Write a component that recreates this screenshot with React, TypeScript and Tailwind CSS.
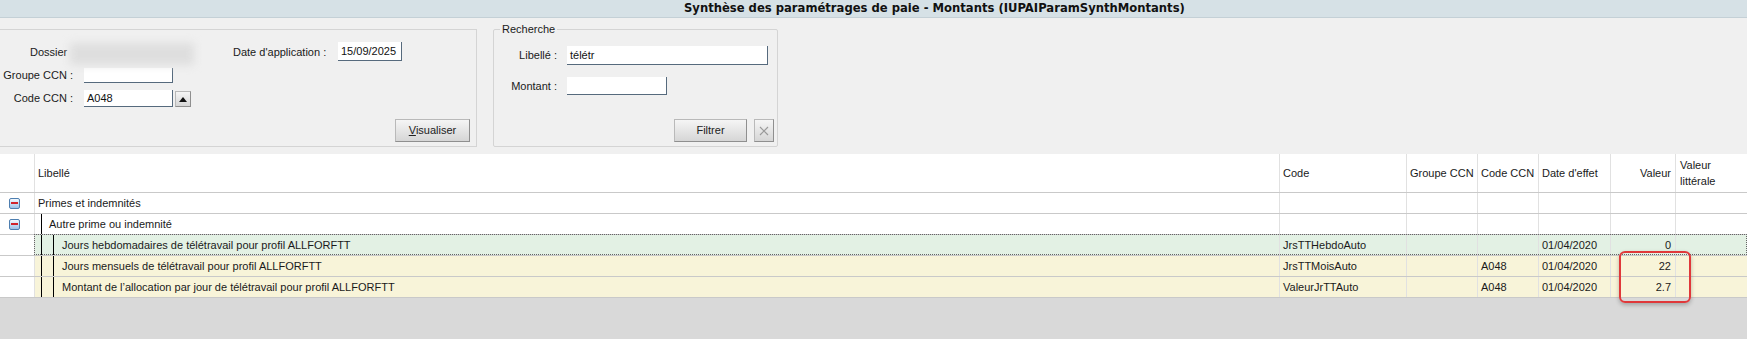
import React from 'react';

const cols = 'grid grid-cols-[35px_1245px_127px_71px_61px_72px_65px_1fr]';
const cell = 'flex items-center border-r border-[#e1e1e1] px-[3px] whitespace-nowrap overflow-hidden';

function MinusIcon() {
  return (
    <div className="w-[11px] h-[11px] rounded-[2px] border border-[#4d7eb0] bg-linear-to-b from-[#f4f9fe] to-[#9cc2e8] flex items-center justify-center">
      <div className="w-[7px] h-[2px] bg-[#d1242c]" />
    </div>
  );
}

function Field({ className, value }: { className: string; value?: string }) {
  return (
    <div className={`bg-white border-b border-r border-[#566a7d] flex items-center px-[3px] text-[11px] text-[#111] ${className}`}>
      {value}
    </div>
  );
}

function Btn({ className, children }: { className: string; children: React.ReactNode }) {
  return (
    <div className={`flex items-center justify-center border border-[#b9b9b9] border-r-[#8f8f8f] border-b-[#8f8f8f] bg-linear-to-b from-[#f5f5f5] to-[#d6d6d6] text-[11px] text-[#222] ${className}`}>
      {children}
    </div>
  );
}

const leaves = [
  { label: 'Jours hebdomadaires de télétravail pour profil ALLFORFTT', code: 'JrsTTHebdoAuto', ccn: '', date: '01/04/2020', val: '0', bg: 'bg-[#e3f1e4]', focus: true },
  { label: 'Jours mensuels de télétravail pour profil ALLFORFTT', code: 'JrsTTMoisAuto', ccn: 'A048', date: '01/04/2020', val: '22', bg: 'bg-[#f8f4d9]', focus: false },
  { label: 'Montant de l’allocation par jour de télétravail pour profil ALLFORFTT', code: 'ValeurJrTTAuto', ccn: 'A048', date: '01/04/2020', val: '2.7', bg: 'bg-[#f8f4d9]', focus: false },
];

export default function App() {
  return (
    <div className="relative w-[1747px] h-[339px] overflow-hidden bg-[#d9d9d9] font-['Liberation_Sans',Arial,sans-serif] text-[11px] text-[#1a1a1a]">
      {/* title */}
      <div className="h-[18px] bg-[#d6e1e6] border-b border-[#c4d0d6] flex items-center pl-[684px]">
        <span className="font-['DejaVu_Sans',sans-serif] font-bold text-[11.6px] text-[#111] whitespace-nowrap">
          Synthèse des paramétrages de paie - Montants (IUPAIParamSynthMontants)
        </span>
      </div>

      {/* filters */}
      <div className="h-[136px] bg-[#f0f0f0] flex items-start pt-[11px]">
        <div className="w-[477px] h-[118px] border-t border-r border-b border-[#d4d4d4] flex flex-col">
          <div className="mt-[10px] flex items-start h-[28px]">
            <div className="w-[70px] pl-[30px] h-[24px] flex items-center">Dossier</div>
            <div className="mt-[3px] w-[124px] h-[22px] bg-[#dedede] blur-[4px]" />
            <div className="ml-[39px] w-[105px] h-[24px] flex items-center">Date d'application :</div>
            <Field className="mt-[2px] w-[64px] h-[19px]" value="15/09/2025" />
          </div>
          <div className="flex items-center h-[15px]">
            <div className="w-[73px] text-right">Groupe CCN :</div>
            <Field className="ml-[11px] w-[89px] h-[15px]" />
          </div>
          <div className="mt-[7px] flex items-start h-[17px]">
            <div className="w-[73px] h-[17px] flex items-center justify-end">Code CCN :</div>
            <Field className="ml-[11px] w-[89px] h-[17px]" value="A048" />
            <Btn className="ml-[2px] mt-[1px] w-[16px] h-[16px]">
              <svg width="8" height="5" viewBox="0 0 8 5"><polygon points="4,0 8,5 0,5" fill="#111" /></svg>
            </Btn>
          </div>
          <div className="mt-[12px] flex justify-end pr-[6px]">
            <Btn className="w-[75px] h-[23px]">
              <span><span className="underline">V</span>isualiser</span>
            </Btn>
          </div>
        </div>

        <div className="relative ml-[16px] w-[285px] h-[118px] border border-[#d4d4d4] rounded-[2px] flex flex-col">
          <div className="absolute left-[6px] top-[-8px] px-[2px] bg-[#f0f0f0] leading-[14px]">Recherche</div>
          <div className="mt-[16px] flex items-center">
            <div className="w-[63px] text-right">Libellé :</div>
            <Field className="ml-[10px] w-[201px] h-[19px]" value="télétr" />
          </div>
          <div className="mt-[12px] flex items-center">
            <div className="w-[63px] text-right">Montant :</div>
            <Field className="ml-[10px] w-[100px] h-[18px]" />
          </div>
          <div className="mt-[24px] flex justify-end gap-[7px] pr-[3px]">
            <Btn className="w-[73px] h-[23px]">Filtrer</Btn>
            <Btn className="w-[20px] h-[23px]">
              <svg width="10" height="10" viewBox="0 0 10 10"><path d="M1 1L9 9M9 1L1 9" stroke="#9a9a9a" strokeWidth="1.2" /></svg>
            </Btn>
          </div>
        </div>
      </div>

      {/* table */}
      <div className="bg-white">
        <div className={`${cols} h-[39px] border-b border-[#c9c9c9]`}>
          <div className={cell} />
          <div className={cell}>Libellé</div>
          <div className={cell}>Code</div>
          <div className={cell}>Groupe CCN</div>
          <div className={cell}>Code CCN</div>
          <div className={cell}>Date d'effet</div>
          <div className={`${cell} justify-end pr-[4px]`}>Valeur</div>
          <div className="flex items-center px-[4px] leading-[16px]">Valeur<br />littérale</div>
        </div>

        <div className={`${cols} h-[21px] border-b border-[#c9c9c9]`}>
          <div className={`${cell} pl-[9px]`}><MinusIcon /></div>
          <div className={cell}>Primes et indemnités</div>
          <div className={cell} /><div className={cell} /><div className={cell} /><div className={cell} /><div className={cell} /><div />
        </div>

        <div className={`${cols} h-[21px] border-b border-[#c9c9c9]`}>
          <div className={`${cell} pl-[9px]`}><MinusIcon /></div>
          <div className="flex items-stretch border-r border-[#e1e1e1] pl-[6px]">
            <div className="w-px bg-black" />
            <span className="ml-[7px] self-center whitespace-nowrap">Autre prime ou indemnité</span>
          </div>
          <div className={cell} /><div className={cell} /><div className={cell} /><div className={cell} /><div className={cell} /><div />
        </div>

        {leaves.map((r) => (
          <div key={r.code} className={`relative ${cols} h-[21px] border-b border-[#c9c9c9] ${r.bg}`}>
            <div className={`${cell} bg-white`} />
            <div className="flex items-stretch border-r border-[#e1e1e1] pl-[6px]">
              <div className="w-px bg-black" />
              <div className="ml-[11px] w-px bg-black" />
              <span className="ml-[8px] self-center whitespace-nowrap">{r.label}</span>
            </div>
            <div className={cell}>{r.code}</div>
            <div className={cell} />
            <div className={cell}>{r.ccn}</div>
            <div className={cell}>{r.date}</div>
            <div className={`${cell} justify-end pr-[4px]`}>{r.val}</div>
            <div />
            {r.focus && (
              <div className="absolute left-[34px] right-0 top-[-1px] bottom-0 border border-dotted border-[#666] pointer-events-none" />
            )}
          </div>
        ))}
      </div>

      {/* highlight */}
      <div className="absolute left-[1619px] top-[251px] w-[72px] h-[52px] border-2 border-[#e0383a] rounded-[6px] shadow-[0_2px_4px_rgba(0,0,0,0.25)] pointer-events-none" />
    </div>
  );
}
